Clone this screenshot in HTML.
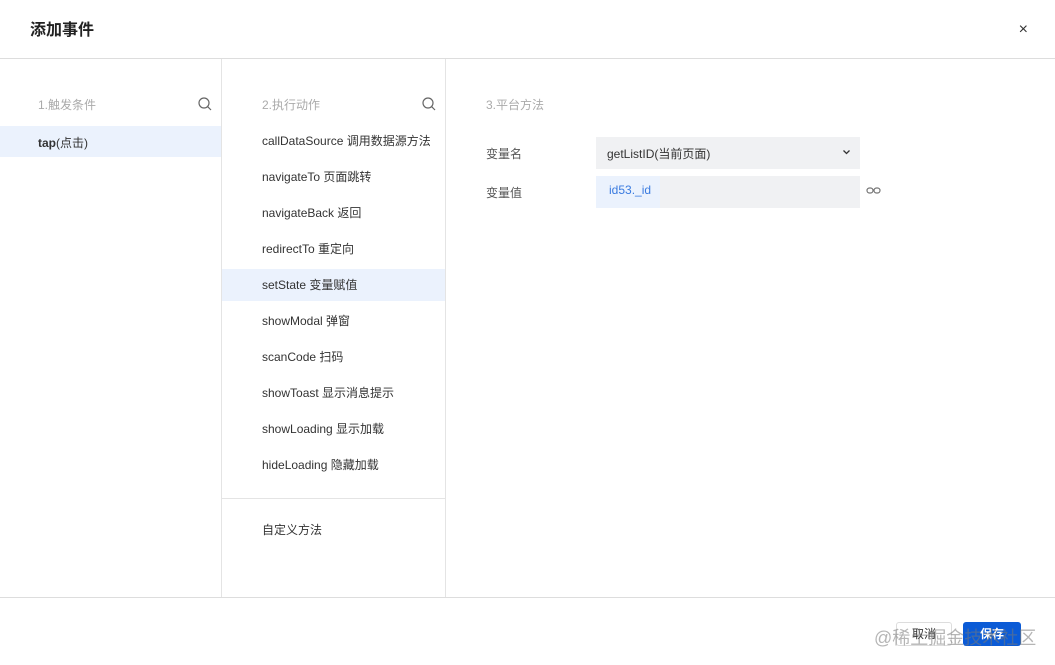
<!DOCTYPE html><html><head><meta charset="utf-8"><style>
*{margin:0;padding:0;box-sizing:border-box}
body{width:1055px;height:665px;background:#fff;font-family:"Liberation Sans","Noto Sans CJK SC",sans-serif;color:#333;position:relative;overflow:hidden;font-size:12px}
.a{position:absolute}
.t{font-size:16px;font-weight:bold;left:30px;top:16px;color:#222}
.hl{background:#ebf2fd}
.it{position:absolute;left:262px;height:32px;line-height:32px;font-size:12px;color:#333}
.g{color:#aaa;font-size:12px}
</style></head><body>
<div class="a t">添加事件</div>
<div class="a" style="right:27px;top:21px;font-size:16px;color:#333">×</div>
<div class="a" style="left:0;top:58px;width:1055px;height:1px;background:#ddd"></div>
<div class="a" style="left:221px;top:59px;width:1px;height:538px;background:#e4e4e4"></div>
<div class="a" style="left:445px;top:59px;width:1px;height:538px;background:#e4e4e4"></div>
<div class="a" style="left:0;top:597px;width:1055px;height:1px;background:#ddd"></div>
<div class="a g" style="left:38px;top:96px">1.触发条件</div>
<div class="a g" style="left:262px;top:96px">2.执行动作</div>
<div class="a g" style="left:486px;top:96px">3.平台方法</div>
<svg class="a" style="left:198px;top:97px" width="14" height="14" viewBox="0 0 14 14"><circle cx="6" cy="6" r="5" fill="none" stroke="#666" stroke-width="1.2"/><path d="M9.7 9.7L13 13" stroke="#666" stroke-width="1.2"/></svg>
<svg class="a" style="left:422px;top:97px" width="14" height="14" viewBox="0 0 14 14"><circle cx="6" cy="6" r="5" fill="none" stroke="#666" stroke-width="1.2"/><path d="M9.7 9.7L13 13" stroke="#666" stroke-width="1.2"/></svg>
<div class="a hl" style="left:0;top:126px;width:221px;height:31px"></div>
<div class="a" style="left:38px;top:134px;font-weight:bold;color:#333">tap<span style="font-weight:normal">(点击)</span></div>
<div class="a hl" style="left:222px;top:269px;width:223px;height:32px"></div>
<div class="it" style="top:125px">callDataSource 调用数据源方法</div>
<div class="it" style="top:161px">navigateTo 页面跳转</div>
<div class="it" style="top:197px">navigateBack 返回</div>
<div class="it" style="top:233px">redirectTo 重定向</div>
<div class="it" style="top:269px">setState 变量赋值</div>
<div class="it" style="top:305px">showModal 弹窗</div>
<div class="it" style="top:341px">scanCode 扫码</div>
<div class="it" style="top:377px">showToast 显示消息提示</div>
<div class="it" style="top:413px">showLoading 显示加载</div>
<div class="it" style="top:449px">hideLoading 隐藏加载</div>
<div class="a" style="left:222px;top:498px;width:223px;height:1px;background:#e4e4e4"></div>
<div class="it" style="top:514px">自定义方法</div>
<div class="a" style="left:486px;top:145px;color:#555">变量名</div>
<div class="a" style="left:486px;top:184px;color:#555">变量值</div>
<div class="a" style="left:596px;top:137px;width:264px;height:32px;background:#f0f1f3"></div>
<div class="a" style="left:607px;top:145px;color:#333">getListID(当前页面)</div>
<svg class="a" style="left:842px;top:149px" width="9" height="6" viewBox="0 0 9 6"><path d="M1.5 1.5L4.5 4.5L7.5 1.5" fill="none" stroke="#333" stroke-width="1.3"/></svg>
<div class="a" style="left:596px;top:176px;width:264px;height:32px;background:#f0f1f3"></div>
<div class="a" style="left:596px;top:176px;width:64px;height:32px;background:#ebf2fd"></div>
<div class="a" style="left:609px;top:183px;color:#3a7be0">id53._id</div>
<svg class="a" style="left:866px;top:186px" width="15" height="9" viewBox="0 0 15 9"><rect x="1" y="2" width="6" height="5" rx="2.5" fill="none" stroke="#777" stroke-width="1.2"/><rect x="8" y="2" width="6" height="5" rx="2.5" fill="none" stroke="#777" stroke-width="1.2"/></svg>
<div class="a" style="left:896px;top:622px;width:56px;height:24px;border:1px solid #ddd;border-radius:3px;text-align:center;line-height:22px;color:#333">取消</div>
<div class="a" style="left:963px;top:622px;width:58px;height:24px;background:#0b5bd6;border-radius:3px;text-align:center;line-height:24px;color:#fff;font-weight:bold">保存</div>
<div class="a" style="left:874px;top:624px;font-size:18px;color:rgba(120,120,120,0.55)">@稀土掘金技术社区</div>
</body></html>
